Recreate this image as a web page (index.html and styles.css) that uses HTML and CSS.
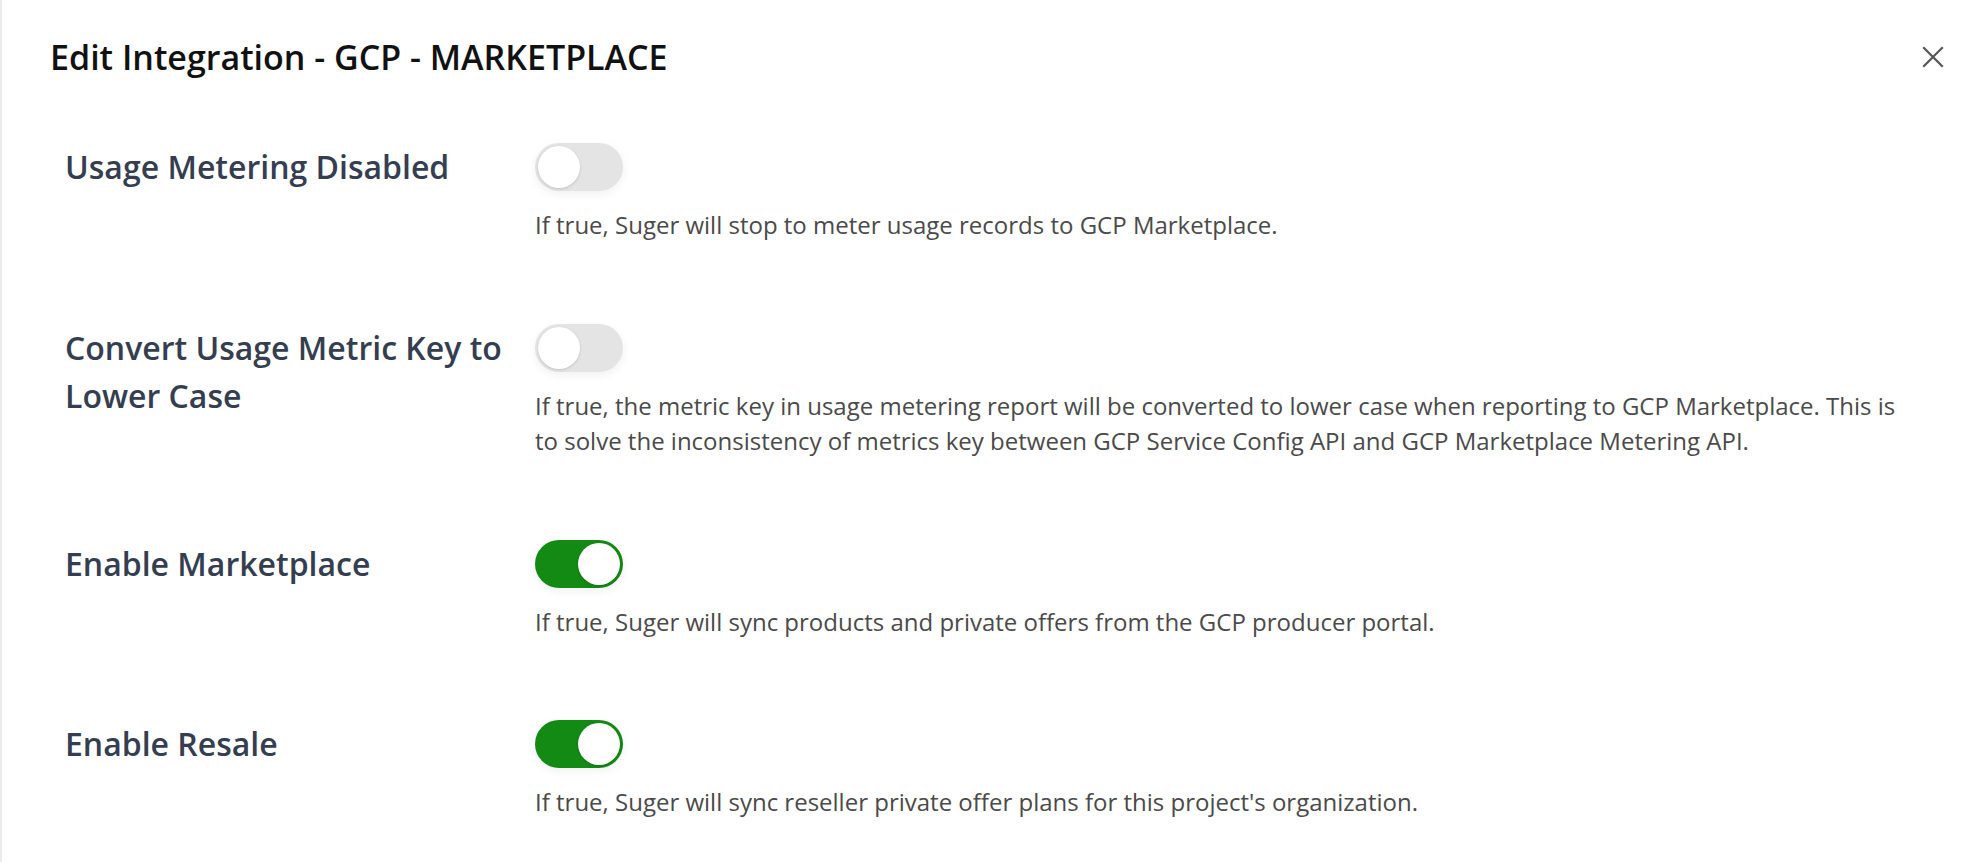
FILE: index.html
```html
<!DOCTYPE html>
<html lang="en">
<head>
<meta charset="utf-8">
<title>Edit Integration - GCP - MARKETPLACE</title>
<link rel="stylesheet" href="styles.css">
</head>
<body>
<div class="drawer">
  <header class="drawer-header">
    <h1 class="drawer-title">Edit Integration - GCP - MARKETPLACE</h1>
    <button class="close-btn" aria-label="Close">
      <svg width="22" height="22" viewBox="0 0 22 22"><path d="M2 2 L20 20 M20 2 L2 20" stroke="#555" stroke-width="2.2" stroke-linecap="square" fill="none"/></svg>
    </button>
  </header>
  <div class="settings">
    <div class="setting">
      <div class="setting-label">Usage Metering Disabled</div>
      <div class="setting-body">
        <span class="toggle"><span class="knob"></span></span>
        <p class="setting-desc">If true, Suger will stop to meter usage records to GCP Marketplace.</p>
      </div>
    </div>
    <div class="setting">
      <div class="setting-label">Convert Usage Metric Key to Lower Case</div>
      <div class="setting-body">
        <span class="toggle"><span class="knob"></span></span>
        <p class="setting-desc">If true, the metric key in usage metering report will be converted to lower case when reporting to GCP Marketplace. This is to solve the inconsistency of metrics key between GCP Service Config API and GCP Marketplace Metering API.</p>
      </div>
    </div>
    <div class="setting">
      <div class="setting-label">Enable Marketplace</div>
      <div class="setting-body">
        <span class="toggle on"><span class="knob"></span></span>
        <p class="setting-desc">If true, Suger will sync products and private offers from the GCP producer portal.</p>
      </div>
    </div>
    <div class="setting">
      <div class="setting-label">Enable Resale</div>
      <div class="setting-body">
        <span class="toggle on"><span class="knob"></span></span>
        <p class="setting-desc">If true, Suger will sync reseller private offer plans for this project's organization.</p>
      </div>
    </div>
  </div>
</div>
</body>
</html>
```

FILE: styles.css
```css
html, body {
  margin: 0;
  padding: 0;
  background: #ffffff;
}
body {
  font-family: "Open Sans", "Noto Sans", sans-serif;
  height: 862px;
  overflow: hidden;
}
.drawer {
  height: 100%;
  border-left: 2px solid #ececec;
  box-sizing: border-box;
}
.drawer-header {
  display: flex;
  align-items: center;
  justify-content: space-between;
  padding: 34px 42px 0 48px;
}
.drawer-title {
  margin: 0;
  font-size: 34px;
  line-height: 46px;
  font-weight: 600;
  color: #111111;
}
.close-btn {
  background: none;
  border: 0;
  padding: 0;
  width: 22px;
  height: 22px;
  display: flex;
  cursor: pointer;
}
.settings {
  display: flex;
  flex-direction: column;
  gap: 81px;
  padding: 63px 65px 0 63px;
}
.setting {
  display: grid;
  grid-template-columns: 470px 1fr;
  align-items: start;
}
.setting-label {
  font-size: 32px;
  line-height: 48px;
  font-weight: 600;
  color: #343e50;
  padding-right: 20px;
}
.setting-body {
  display: flex;
  flex-direction: column;
  align-items: flex-start;
}
.toggle {
  display: block;
  position: relative;
  width: 88px;
  height: 48px;
  border-radius: 24px;
  background: #e4e4e4;
  box-shadow: 0 3px 10px rgba(0, 0, 0, 0.06);
}
.toggle .knob {
  position: absolute;
  top: 3px;
  left: 3px;
  width: 42px;
  height: 42px;
  border-radius: 50%;
  background: #ffffff;
  box-shadow: 0 1px 3px rgba(0, 0, 0, 0.15);
}
.toggle.on {
  background: #138a14;
}
.toggle.on .knob {
  left: 43px;
}
.setting-desc {
  margin: 16px 0 0;
  font-size: 24px;
  line-height: 35.5px;
  font-weight: 400;
  color: #4a4a4a;
}
```
